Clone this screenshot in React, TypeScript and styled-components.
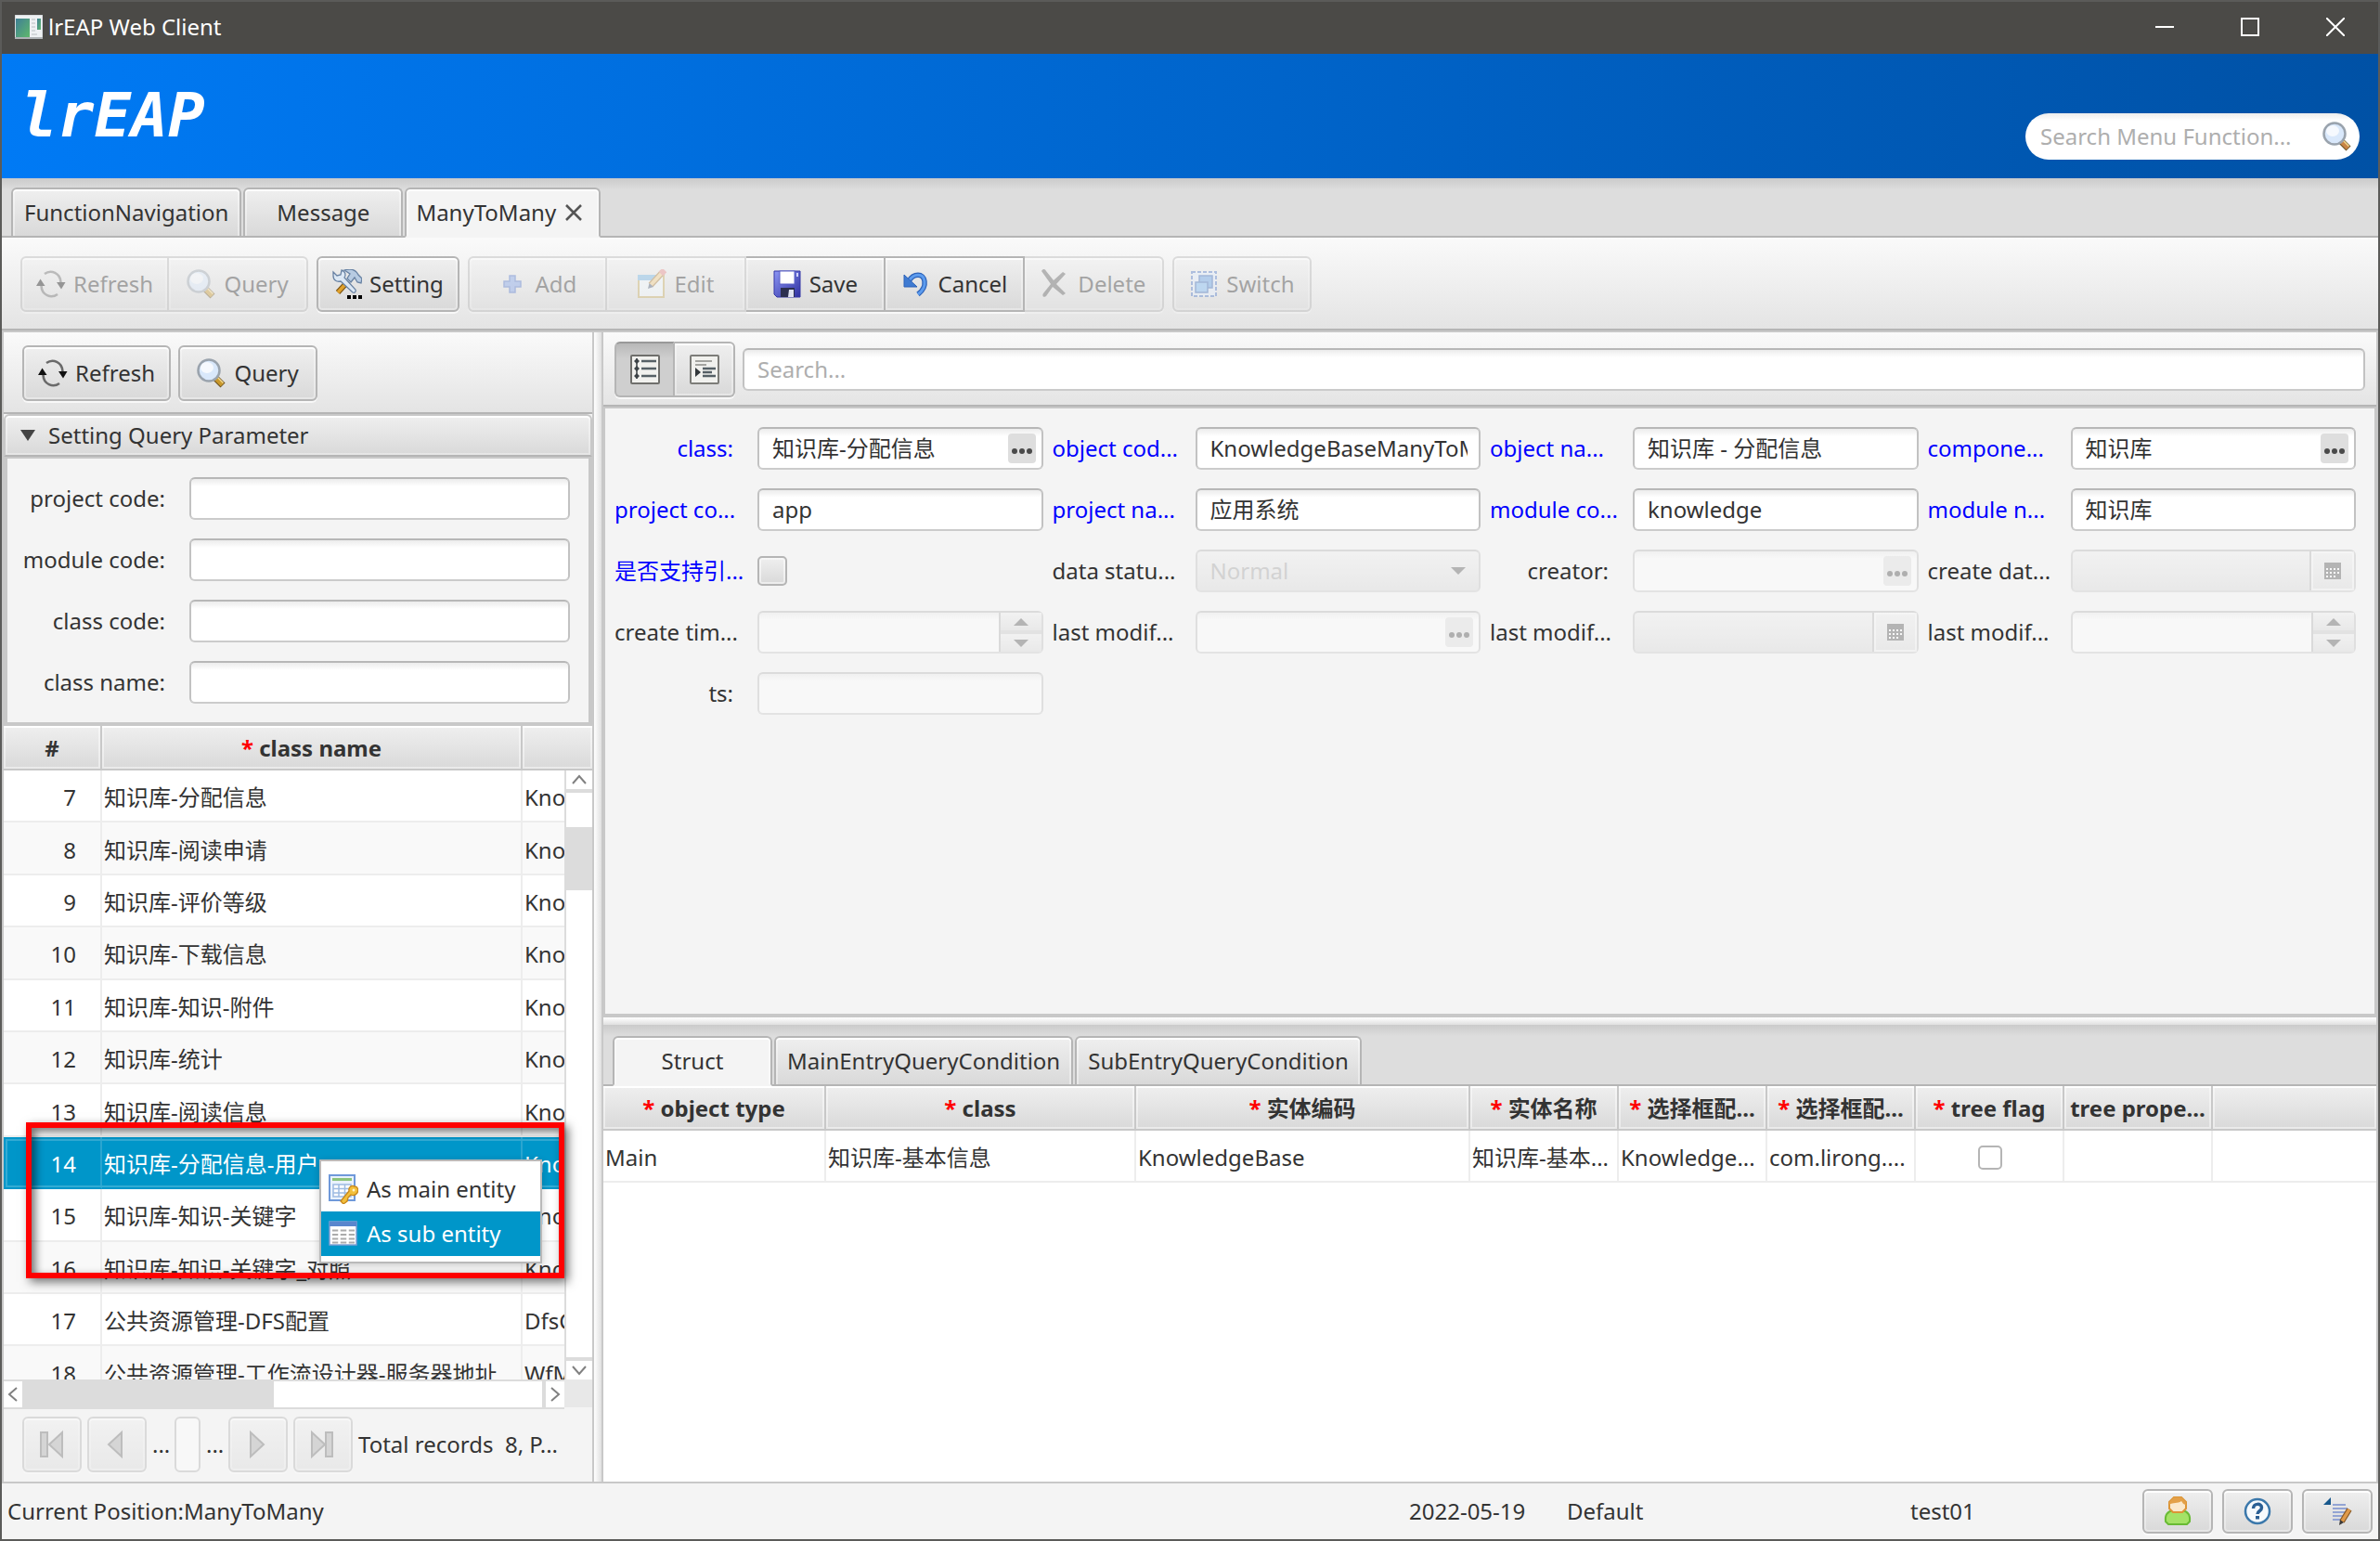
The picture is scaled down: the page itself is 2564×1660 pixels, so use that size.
import React, { useId } from "react";
import styled, { createGlobalStyle, css } from "styled-components";

/* ---------- theme values ---------- */
const edge = "#b5b5b5";
const line = "#c8c8c8";
const cellLine = "#ededed";
const accent = "#0096c9";
const face = "linear-gradient(#efefef, #d9d9d9)";
const barFace = "linear-gradient(#fafafa, #e4e4e4)";
const font = '"Noto Sans", "Noto Sans CJK SC", sans-serif';

const GlobalStyle = createGlobalStyle`
  * { box-sizing: border-box; }
  body { margin: 0; }
  body, button, input, select, table { font: 24px/32px ${font}; color: #333; }
  button { margin: 0; padding: 0; }
`;

/* ---------- icons ---------- */
const Svg = styled.svg<{ $w?: number; $h?: number }>`
  display: block;
  flex: none;
  width: ${(p) => p.$w ?? 32}px;
  height: ${(p) => p.$h ?? 32}px;
`;

const WindowIcon = () => (
  <Svg viewBox="0 0 30 26" $w={30} $h={26}>
    <defs>
      <linearGradient id="winPane" x1="0" y1="0" x2="1" y2="1">
        <stop offset="0" stopColor="#3f7f96" />
        <stop offset="1" stopColor="#5fb86c" />
      </linearGradient>
    </defs>
    <rect x="0" y="0" width="30" height="25" fill="#eef1f3" stroke="#c3c8cc" />
    <rect x="1" y="4" width="15" height="20" fill="url(#winPane)" />
    <rect x="24" y="4" width="4" height="12" fill="url(#winPane)" />
    <path d="M18 5h4M18 9h4M18 13h4M18 17h4M18 21h6" stroke="#b9bec2" strokeWidth="1" />
    <rect x="0" y="24" width="30" height="2" fill="#aeb2b5" />
  </Svg>
);

const RefreshIcon = () => (
  <Svg viewBox="0 0 32 32">
    <g fill="none" stroke="#6a6a6a" strokeWidth="2.6">
      <path d="M9 5C16 0 26 4 26.500 14" />
      <path d="M23 27C16 32 6 28 5.500 18" />
    </g>
    <path d="M22 14h9.500l-4.500 7.500z" fill="#111" />
    <path d="M0 18h9.500L4.500 10.500z" fill="#111" />
  </Svg>
);

const MagnifierIcon = ({ handle = "#c9982c" }: { handle?: string }) => (
  <Svg viewBox="0 0 32 32">
    <path d="M20.500 21.500l7.500 7.500" stroke="#6b5222" strokeWidth="7" />
    <path d="M20.500 21.500l7 7" stroke={handle} strokeWidth="5" />
    <path d="M22.500 20.500l6 6" stroke="#f3d98f" strokeWidth="1.500" />
    <circle cx="13" cy="13" r="11.500" fill="#d9e8fb" stroke="#9aa3ad" strokeWidth="2.500" />
    <ellipse cx="11" cy="10" rx="7" ry="6" fill="#fff" opacity=".75" />
  </Svg>
);

const ToolsIcon = () => (
  <Svg viewBox="0 0 32 32">
    <path d="M17 13L6 25" stroke="#7d5512" strokeWidth="6" />
    <path d="M17 13L6 25" stroke="#e0a12c" strokeWidth="3.500" />
    <path d="M13 1c7-2 12-1 15 5l4 4-1 5-4-1-3-5-4 5-4-4 3-5z" fill="#b7cbe2" stroke="#6882a3" strokeWidth="1.300" />
    <path d="M1 3l4 4 4-1 1-5c4 1 5 5 3 8l12 13c1 2-1 4-3 3L9 13c-4 1-8-1-8-6z" fill="#dce8f5" stroke="#6882a3" strokeWidth="1.300" />
    <path d="M16 28h4v4h-4zM22 28h4v4h-4zM28 28h4v4h-4z" fill="#000" />
  </Svg>
);

const AddIcon = () => (
  <Svg viewBox="0 0 32 32">
    <path d="M13 7h6v6h6v6h-6v6h-6v-6H7v-6h6z" fill="#7c9ee6" stroke="#4c71c6" strokeWidth="1.500" />
  </Svg>
);

const EditIcon = () => (
  <Svg viewBox="0 0 32 32">
    <rect x="2" y="7" width="27" height="23" fill="#f1f8fd" stroke="#c5ab5d" strokeWidth="2" />
    <rect x="1" y="6" width="20" height="6" fill="#6fb1e2" />
    <path d="M28 3L15 17" stroke="#a67831" strokeWidth="6.500" />
    <path d="M28 3L15 17" stroke="#f1cb84" strokeWidth="4" />
    <path d="M30 1l-4 4" stroke="#e58686" strokeWidth="6.500" />
    <path d="M12 21l1.500-6 4.500 4z" fill="#4a5a77" />
  </Svg>
);

const SaveIcon = () => (
  <Svg viewBox="0 0 32 32">
    <defs>
      <linearGradient id="disk" x1="0" y1="0" x2="1" y2="1">
        <stop offset="0" stopColor="#8c96f5" />
        <stop offset="1" stopColor="#2e30a0" />
      </linearGradient>
    </defs>
    <path d="M2 2h28v28H5l-3-3z" fill="url(#disk)" stroke="#3437a6" strokeWidth="1" />
    <rect x="8" y="2" width="16" height="14" fill="#fff" stroke="#5a60c8" />
    <rect x="9" y="20" width="15" height="10" fill="#2b2f4f" />
    <path d="M18 22h5v8h-6z" fill="#dfe3f2" />
    <rect x="26" y="4" width="2" height="4" fill="#cfd2ff" />
  </Svg>
);

const UndoIcon = () => (
  <Svg viewBox="0 0 32 32">
    <path d="M8 13C13 4 24 4 25 13c1 7-3 11-7 14" fill="none" stroke="#2d62b8" strokeWidth="5.500" />
    <path d="M8 13C13 4 24 4 25 13c1 7-3 11-7 14" fill="none" stroke="#5d9cee" strokeWidth="3" />
    <path d="M3 6v13h14z" fill="#3f7bd2" stroke="#2d62b8" strokeWidth="1" />
  </Svg>
);

const DeleteIcon = () => (
  <Svg viewBox="0 0 32 32">
    <path d="M1 2c2-3 4-2 5 0l8 10L24 3l3 2-10 11 10 10-3 2-11-9-7 10c-2 2-5 0-3-3l8-10z" fill="#5a5a5a" />
  </Svg>
);

const SwitchIcon = () => (
  <Svg viewBox="0 0 32 32">
    <rect x="3" y="3" width="26" height="26" fill="#dfeafa" stroke="#4a74c4" strokeWidth="2" strokeDasharray="4 2" />
    <rect x="11" y="7" width="14" height="13" fill="#5b9be4" stroke="#3565b5" strokeWidth="1.500" />
    <rect x="7" y="14" width="13" height="11" fill="#76b5f3" stroke="#3565b5" strokeWidth="1.500" />
  </Svg>
);

const ListPageIcon = () => (
  <Svg viewBox="0 0 32 32">
    <rect x="1" y="1" width="30" height="30" rx="1" fill="#f1f1ee" stroke="#6f6f6c" strokeWidth="2" />
    <path d="M12 7h16M12 15h16M12 23h16" stroke="#566066" strokeWidth="2.500" />
    <path d="M7 4v22" stroke="#3c4246" strokeWidth="1.500" />
    <path d="M7 4l3 3-3 3-3-3zM7 12l3 3-3 3-3-3zM7 20l3 3-3 3-3-3z" fill="#3c4246" />
  </Svg>
);

const IndentPageIcon = () => (
  <Svg viewBox="0 0 32 32">
    <rect x="1" y="1" width="30" height="30" rx="1" fill="#f1f1ee" stroke="#7d7d79" strokeWidth="2" />
    <path d="M6 7h18M6 11h12" stroke="#a4a4a0" strokeWidth="2.200" />
    <path d="M14 15h14M14 19h10M14 23h14" stroke="#566066" strokeWidth="2.500" />
    <path d="M6 14l6 5-6 5z" fill="#33383b" />
  </Svg>
);

const KeyTableIcon = () => (
  <Svg viewBox="0 0 32 32">
    <rect x="1" y="1" width="27" height="27" fill="#e9f2fc" stroke="#6f99da" strokeWidth="2" />
    <rect x="4" y="4" width="21" height="3" fill="#8cc47c" />
    <path d="M5 11h19v13H5zM5 15.500h19M5 20h19M11 11v13M17.500 11v13" fill="#fff" stroke="#9dbbe2" strokeWidth="1.500" />
    <path d="M13 29l9-11c-1-4 3-7 6-5 4 0 5 5 2 8-2 2-4 2-6 1l-3 3-1 4-4 3z" fill="#f2bf3b" stroke="#c8871a" strokeWidth="1.300" />
    <circle cx="27" cy="17" r="1.500" fill="#fff3c4" />
  </Svg>
);

const TableIcon = () => (
  <Svg viewBox="0 0 32 32">
    <rect x="1" y="3" width="29" height="25" fill="#fff" stroke="#7f9fd4" strokeWidth="1.500" />
    <rect x="1" y="3" width="29" height="5" fill="#5a86cd" />
    <path d="M4 12.500h24M4 17h24M4 21.500h24M4 25.500h24" stroke="#ababab" strokeWidth="2" />
    <path d="M11.500 9v18M20.500 9v18" stroke="#fff" strokeWidth="2.500" />
  </Svg>
);

const UserIcon = () => (
  <Svg viewBox="0 0 32 32">
    <path d="M3 27c-1-8 3-11 8-12h10c5 1 9 4 8 12l-3 3H6z" fill="#a5e267" stroke="#69bb35" strokeWidth="2" />
    <path d="M12 1h8l5 5v7l-4 4h-10l-4-4V6z" fill="#fbe8cb" stroke="#dc9536" strokeWidth="2" />
    <path d="M7 9V6l5-5h8l5 5v3c-3 0-4-3-5-4-4 3-9 1-13 4z" fill="#e3a048" />
  </Svg>
);

const HelpIcon = () => (
  <Svg viewBox="0 0 32 32">
    <circle cx="16" cy="16" r="13" fill="#f6fafd" stroke="#3b78ab" strokeWidth="2.500" />
    <path d="M11.500 13c0-6 9-6 9-1 0 4-4.500 3.500-4.500 7" fill="none" stroke="#2a5f94" strokeWidth="3.500" />
    <rect x="14" y="21" width="4" height="3.500" fill="#2a5f94" />
  </Svg>
);

const NoteIcon = () => (
  <Svg viewBox="0 0 32 32">
    <path d="M1 9L9 1v8z" fill="#17588c" />
    <path d="M11 9h14M11 13h16M11 17h14M11 21h11M11 25h9" stroke="#93a4d3" strokeWidth="2" />
    <path d="M29 14l-8 13" stroke="#8a5a25" strokeWidth="6" />
    <path d="M29 14l-8 13" stroke="#e09a4a" strokeWidth="3.500" />
    <path d="M18 31l1-6 4 3z" fill="#3a3a3a" />
  </Svg>
);

type PagerKind = "first" | "prev" | "next" | "last";
const pagerShapes: Record<PagerKind, string> = {
  first: "M4 3h7v26H4zM27 3v26L13 16z",
  prev: "M21 3v26L7 16z",
  next: "M8 3v26l14-13z",
  last: "M4 3v26l14-13zM19 3h7v26h-7z",
};
const PagerIcon = ({ kind }: { kind: PagerKind }) => (
  <Svg viewBox="0 0 32 32">
    <path d={pagerShapes[kind]} fill="#a8a8a8" stroke="#6c6c6c" strokeWidth="2" />
  </Svg>
);

const Chevron = ({ d }: { d: string }) => (
  <Svg viewBox="0 0 20 20" $w={20} $h={20}>
    <path d={d} fill="none" stroke="#808080" strokeWidth="2" />
  </Svg>
);

const Triangle = ({ up }: { up?: boolean }) => (
  <Svg viewBox="0 0 16 8" $w={16} $h={8}>
    <path d={up ? "M0 8h16L8 0z" : "M0 0h16L8 8z"} fill="#555" />
  </Svg>
);

const Dots = () => (
  <Svg viewBox="0 0 24 8" $w={24} $h={8}>
    <circle cx="4" cy="4" r="3" fill="#4a4a4a" />
    <circle cx="12" cy="4" r="3" fill="#4a4a4a" />
    <circle cx="20" cy="4" r="3" fill="#4a4a4a" />
  </Svg>
);

const CalendarIcon = () => (
  <Svg viewBox="0 0 18 18" $w={18} $h={18}>
    <rect width="18" height="18" fill="#555" />
    <path d="M2 6h2v2H2zM6 6h2v2H6zM10 6h2v2h-2zM14 6h2v2h-2zM2 10h2v2H2zM6 10h2v2H6zM10 10h2v2h-2zM14 10h2v2h-2zM2 14h2v2H2zM6 14h2v2H6zM10 14h2v2h-2z" fill="#fff" />
  </Svg>
);

/* ---------- window frame ---------- */
const Window = styled.div`
  display: flex;
  flex-direction: column;
  height: 100vh;
  border: 2px solid #5b5b59;
  background: #f4f4f4;
  white-space: nowrap;
  overflow: hidden;
`;

const TitleBar = styled.header`
  display: flex;
  align-items: center;
  height: 56px;
  flex: none;
  padding: 0 0 2px 14px;
  background: #4b4a47;
  color: #fff;
`;

const TitleText = styled.span`
  flex: 1;
  margin-left: 6px;
`;

const WindowButton = styled.button`
  display: grid;
  place-items: center;
  width: 92px;
  height: 54px;
  border: 0;
  background: none;
`;

const Banner = styled.div`
  display: flex;
  align-items: center;
  justify-content: space-between;
  height: 134px;
  flex: none;
  padding: 0 20px;
  background: linear-gradient(90deg, #007af5, #0051a5);
`;

const Logo = styled.h1`
  margin: 0;
  font: italic bold 66px/120px "DejaVu Sans Mono", monospace;
  color: #fff;
`;

const MenuSearch = styled.label`
  display: flex;
  align-items: center;
  align-self: flex-end;
  width: 360px;
  height: 50px;
  margin-bottom: 20px;
  padding: 0 8px 0 16px;
  border-radius: 25px;
  background: linear-gradient(#ececec, #fff 8px);
`;

const BareInput = styled.input`
  flex: 1;
  width: 0;
  min-width: 0;
  padding: 0;
  border: 0;
  outline: 0;
  background: none;
  &::placeholder { color: #aeaeae; opacity: 1; }
`;

/* ---------- tabs ---------- */
const TabStrip = styled.nav<{ $top?: number }>`
  display: flex;
  flex: none;
  gap: 2px;
  padding: ${(p) => p.$top ?? 10}px 10px 0;
  border-bottom: 2px solid ${edge};
  background: linear-gradient(#cbcbcb, #ddd 12px);
`;

const Tab = styled.button<{ $active?: boolean; $closable?: boolean }>`
  display: flex;
  align-items: center;
  justify-content: center;
  gap: 10px;
  min-width: 172px;
  height: 52px;
  padding: 0 ${(p) => (p.$closable ? 18 : 12)}px 0 ${(p) => (p.$closable ? 10 : 12)}px;
  border: 2px solid ${edge};
  border-bottom: 0;
  border-radius: 6px 6px 0 0;
  background: ${(p) => (p.$active ? "#f4f4f4" : face)};
  box-shadow: inset 0 2px 0 #fff, inset 2px 0 0 rgba(255, 255, 255, 0.4), inset -2px 0 0 rgba(255, 255, 255, 0.4);
  ${(p) => p.$active && css`height: 54px; margin-bottom: -2px; border-bottom: 2px solid #f4f4f4;`}
`;

/* ---------- buttons ---------- */
const bevel = css`
  border: 2px solid ${edge};
  background: ${face};
  box-shadow: inset 0 2px 0 #fff, inset 0 0 0 2px rgba(255, 255, 255, 0.35), 0 2px 0 rgba(255, 255, 255, 0.7);
`;

const PushButton = styled.button`
  display: flex;
  align-items: center;
  justify-content: center;
  gap: 8px;
  min-width: 150px;
  height: 60px;
  padding: 0 15px;
  ${bevel}
  border-radius: 6px;
  &:disabled { color: #333; opacity: 0.4; }
`;

const IconButton = styled(PushButton)<{ $w: number; $h: number }>`
  min-width: 0;
  width: ${(p) => p.$w}px;
  height: ${(p) => p.$h}px;
  padding: 0;
`;

const ButtonGroup = styled.div`
  display: flex;
  & > button { border-radius: 0; }
  & > button:not(:first-child) { border-left: 0; }
  & > button:first-child { border-radius: 6px 0 0 6px; }
  & > button:last-child { border-radius: 0 6px 6px 0; }
`;

const ToolBar = styled.div<{ $pad: string; $gap?: number }>`
  display: flex;
  align-items: center;
  flex: none;
  gap: ${(p) => p.$gap ?? 8}px;
  padding: ${(p) => p.$pad};
  border-bottom: 2px solid ${edge};
  background: ${barFace};
`;

const ToggleButton = styled.button<{ $on?: boolean }>`
  display: grid;
  place-items: center;
  width: 65px;
  height: 60px;
  ${bevel}
  ${(p) => p.$on && css`
    border-top-color: #999;
    background: linear-gradient(#b8b8b8, #cfcfcf 16px);
    box-shadow: 0 2px 0 rgba(255, 255, 255, 0.7);
  `}
`;

/* ---------- layout ---------- */
const Workspace = styled.main`
  display: grid;
  grid-template-columns: 638px 8px minmax(0, 1fr);
  flex: 1;
  min-height: 0;
  border-top: 2px solid ${line};
  border-bottom: 2px solid ${line};
`;

const SidePane = styled.section`
  display: flex;
  flex-direction: column;
  min-height: 0;
  border: solid ${line};
  border-width: 0 2px;
`;

const Divider = styled.div<{ $across?: boolean }>`
  background: linear-gradient(${(p) => (p.$across ? "180deg" : "90deg")}, #fff, #e0e0e0);
`;

const DetailPane = styled.section`
  display: grid;
  grid-template-rows: minmax(0, 3fr) 8px minmax(0, 2fr);
  min-width: 0;
  min-height: 0;
  border: solid ${line};
  border-width: 0 2px;
`;

const DetailTop = styled.div`
  display: flex;
  flex-direction: column;
  min-height: 0;
`;

const DetailBottom = styled.div`
  display: flex;
  flex-direction: column;
  min-height: 0;
  background: #fff;
`;

/* ---------- fields ---------- */
const Box = styled.span<{ $off?: boolean; $flat?: boolean; $grow?: boolean; $pad?: string }>`
  display: flex;
  align-items: center;
  min-width: 0;
  ${(p) => p.$grow && css`flex: 1;`}
  height: 46px;
  padding: ${(p) => p.$pad ?? "0 12px 0 14px"};
  border: 2px solid;
  border-color: #b7b7b7 #c2c2c2 #cbcbcb;
  border-radius: 6px;
  background: ${(p) => (p.$flat ? face : "linear-gradient(#ececec, #fff 8px)")};
  ${(p) => p.$off && css`opacity: 0.4;`}
`;

const LookupButton = styled.button`
  display: grid;
  place-items: center;
  width: 30px;
  height: 32px;
  padding-top: 6px;
  border: 0;
  border-radius: 4px;
  background: #dedede;
`;

const DateButton = styled.button`
  display: grid;
  place-items: center;
  align-self: stretch;
  width: 48px;
  border: 0;
  border-left: 2px solid ${edge};
  background: none;
  box-shadow: inset 0 0 0 2px rgba(255, 255, 255, 0.6);
`;

const SpinnerButtons = styled.span`
  display: grid;
  grid-template-rows: 1fr 1fr;
  gap: 4px;
  align-self: stretch;
  width: 46px;
  border-left: 2px solid ${edge};
  background: ${line};
`;

const SpinButton = styled.button`
  display: grid;
  place-items: center;
  border: 0;
  background: ${face};
`;

const StatusSelect = styled.select`
  flex: 1;
  min-width: 0;
  padding: 0;
  border: 0;
  background: none;
  appearance: none;
  &:disabled { color: #a0a0a0; opacity: 1; }
`;

const CheckInput = styled.input<{ $size: number; $plain?: boolean }>`
  appearance: none;
  display: block;
  width: ${(p) => p.$size}px;
  height: ${(p) => p.$size}px;
  margin: 0;
  border: 2px solid ${edge};
  border-radius: 5px;
  background: ${(p) => (p.$plain ? "#fff" : face)};
  ${(p) => !p.$plain && css`box-shadow: inset 0 0 0 2px rgba(255, 255, 255, 0.5);`}
`;

const FieldGrid = styled.form`
  display: grid;
  grid-template-columns: repeat(4, minmax(0, 1fr));
  gap: 20px 10px;
  flex: 1;
  align-content: start;
  padding: 20px 20px 20px 10px;
  border: solid ${line};
  border-width: 2px 2px 4px;
`;

const FieldRow = styled.div`
  display: grid;
  grid-template-columns: 154px minmax(0, 1fr);
  align-items: center;
  height: 46px;
`;

const FieldLabel = styled.label<{ $key?: boolean; $cut?: boolean }>`
  padding-right: ${(p) => (p.$cut ? 0 : 26)}px;
  text-align: ${(p) => (p.$cut ? "left" : "right")};
  color: ${(p) => (p.$key ? "#00f" : "#333")};
`;

type Kind = "text" | "lookup" | "check" | "select" | "date" | "time";
type FieldSpec = { label: string; kind?: Kind; value?: string; isKey?: boolean; off?: boolean };

const fields: FieldSpec[] = [
  { label: "class:", kind: "lookup", value: "知识库-分配信息", isKey: true },
  { label: "object cod...", value: "KnowledgeBaseManyToMany", isKey: true },
  { label: "object na...", value: "知识库 - 分配信息", isKey: true },
  { label: "compone...", kind: "lookup", value: "知识库", isKey: true },
  { label: "project co...", value: "app", isKey: true },
  { label: "project na...", value: "应用系统", isKey: true },
  { label: "module co...", value: "knowledge", isKey: true },
  { label: "module n...", value: "知识库", isKey: true },
  { label: "是否支持引...", kind: "check", isKey: true },
  { label: "data statu...", kind: "select", value: "Normal", off: true },
  { label: "creator:", kind: "lookup", off: true },
  { label: "create dat...", kind: "date", off: true },
  { label: "create tim...", kind: "time", off: true },
  { label: "last modif...", kind: "lookup", off: true },
  { label: "last modif...", kind: "date", off: true },
  { label: "last modif...", kind: "time", off: true },
  { label: "ts:", off: true },
];

function Control({ id, kind = "text", value = "", off }: FieldSpec & { id: string }) {
  const input = <BareInput id={id} defaultValue={value} disabled={off} />;
  switch (kind) {
    case "check":
      return <CheckInput id={id} type="checkbox" $size={32} />;
    case "select":
      return (
        <Box $off={off} $flat $pad="0 14px">
          <StatusSelect id={id} disabled={off} defaultValue={value}>
            <option>{value}</option>
          </StatusSelect>
          <Triangle />
        </Box>
      );
    case "lookup":
      return (
        <Box $off={off} $pad="0 6px 0 14px">
          {input}
          <LookupButton type="button" aria-label="Choose" disabled={off}><Dots /></LookupButton>
        </Box>
      );
    case "date":
      return (
        <Box $off={off} $flat $pad="0 0 0 14px">
          {input}
          <DateButton type="button" aria-label="Pick date" disabled={off}><CalendarIcon /></DateButton>
        </Box>
      );
    case "time":
      return (
        <Box $off={off} $pad="0 0 0 14px">
          {input}
          <SpinnerButtons>
            <SpinButton type="button" aria-label="Later" disabled={off}><Triangle up /></SpinButton>
            <SpinButton type="button" aria-label="Earlier" disabled={off}><Triangle /></SpinButton>
          </SpinnerButtons>
        </Box>
      );
    default:
      return <Box $off={off}>{input}</Box>;
  }
}

function Field(spec: FieldSpec) {
  const id = useId();
  return (
    <FieldRow>
      <FieldLabel htmlFor={id} $key={spec.isKey} $cut={spec.label.endsWith("...")}>{spec.label}</FieldLabel>
      <Control {...spec} id={id} />
    </FieldRow>
  );
}

/* ---------- query parameters ---------- */
const PaneTitle = styled.button`
  display: flex;
  align-items: center;
  gap: 14px;
  flex: none;
  height: 46px;
  padding: 0 16px;
  border: 2px solid ${line};
  border-bottom-color: ${edge};
  border-radius: 6px 6px 0 0;
  background: ${face};
  box-shadow: inset 0 2px 0 #fff, inset 0 0 0 2px rgba(255, 255, 255, 0.35);
`;

const ParamForm = styled.form`
  display: grid;
  flex: none;
  gap: 20px;
  padding: 20px 20px 20px 0;
  border: 4px solid ${line};
  border-top-width: 2px;
`;

const ParamRow = styled.div`
  display: grid;
  grid-template-columns: minmax(0, 1fr) 410px;
  align-items: center;
`;

const params = ["project code:", "module code:", "class code:", "class name:"];

function Param({ label }: { label: string }) {
  const id = useId();
  return (
    <ParamRow>
      <FieldLabel htmlFor={id}>{label}</FieldLabel>
      <Box><BareInput id={id} /></Box>
    </ParamRow>
  );
}

/* ---------- tables ---------- */
const Table = styled.table<{ $height?: number }>`
  width: 100%;
  flex: none;
  table-layout: fixed;
  border-collapse: separate;
  border-spacing: 0;
  ${(p) => p.$height && css`height: ${p.$height}px;`}
`;

const HeadCell = styled.th`
  height: 48px;
  padding: 2px 0 0;
  border-right: 2px solid ${line};
  border-bottom: 2px solid ${line};
  background: ${face};
  box-shadow: inset 0 2px 0 #fff, inset 0 0 0 2px rgba(255, 255, 255, 0.45);
  font-weight: bold;
  text-align: center;
  overflow: hidden;
  &:last-child { border-right: 0; }
`;

const Star = styled.span`
  color: #f00;
`;

const Row = styled.tr<{ $selected?: boolean; $alt?: boolean }>`
  background: ${(p) => (p.$selected ? accent : p.$alt ? "#f9f9f9" : "#fff")};
  ${(p) => p.$selected && css`
    outline: 2px solid #33abd4;
    outline-offset: -4px;
    & > td { color: #fff; border-color: #2aa5d0 #2aa5d0 ${accent}; }
  `}
`;

const Cell = styled.td<{ $num?: boolean }>`
  height: 56px;
  padding: 4px ${(p) => (p.$num ? 26 : 0)}px 0 2px;
  border-right: 2px solid ${cellLine};
  border-bottom: 2px solid ${cellLine};
  text-align: ${(p) => (p.$num ? "right" : "left")};
  overflow: hidden;
  &:last-child { border-right: 0; }
`;

const CellCenter = styled.div`
  display: grid;
  place-items: center;
`;

const classes: [number, string, string][] = [
  [7, "知识库-分配信息", "Kno"],
  [8, "知识库-阅读申请", "Kno"],
  [9, "知识库-评价等级", "Kno"],
  [10, "知识库-下载信息", "Kno"],
  [11, "知识库-知识-附件", "Kno"],
  [12, "知识库-统计", "Kno"],
  [13, "知识库-阅读信息", "Kno"],
  [14, "知识库-分配信息-用户", "Kno"],
  [15, "知识库-知识-关键字", "Kno"],
  [16, "知识库-知识-关键字_对照", "Kno"],
  [17, "公共资源管理-DFS配置", "DfsC"],
  [18, "公共资源管理-工作流设计器-服务器地址", "WfM"],
];

const GridBody = styled.div`
  position: relative;
  display: grid;
  grid-template-columns: minmax(0, 1fr) 30px;
  grid-template-rows: minmax(0, 1fr) 32px;
  flex: 1;
  min-height: 0;
`;

const Viewport = styled.div`
  min-height: 0;
  overflow: hidden;
  background: #fff;
`;

const ScrollBar = styled.div<{ $across?: boolean }>`
  display: flex;
  flex-direction: ${(p) => (p.$across ? "row" : "column")};
  min-height: 0;
  background: #fff;
  border: solid #dcdcdc;
  border-width: ${(p) => (p.$across ? "2px 0" : "0 0 0 2px")};
`;

const ScrollButton = styled.button<{ $across?: boolean }>`
  display: grid;
  place-items: center;
  flex: none;
  width: ${(p) => (p.$across ? 20 : 28)}px;
  height: ${(p) => (p.$across ? 28 : 20)}px;
  border: 0;
  background: #fff;
`;

const ScrollPart = styled.div<{ $grow: number; $thumb?: boolean }>`
  flex: ${(p) => p.$grow} 1 0;
  background: ${(p) => (p.$thumb ? "#dcdcdc" : "#fff")};
`;

const ScrollGap = styled.div`
  flex: 0 0 4px;
  align-self: stretch;
  background: #dcdcdc;
`;

const Corner = styled.div`
  background: #e8e8e8;
  border-bottom: 2px solid #f4f4f4;
`;

const ContextMenu = styled.menu`
  position: absolute;
  left: 340px;
  top: 419px;
  width: 240px;
  margin: 0;
  padding: 6px 0;
  border: 2px solid #b9b9b9;
  background: #fff;
  box-shadow: 0 2px 8px rgba(0, 0, 0, 0.2);
  list-style: none;
`;

const MenuItem = styled.button<{ $active?: boolean }>`
  display: flex;
  align-items: center;
  gap: 9px;
  width: 100%;
  height: 48px;
  padding: 0 8px;
  border: 0;
  background: ${(p) => (p.$active ? accent : "#fff")};
  color: ${(p) => (p.$active ? "#fff" : "#333")};
`;

const Highlight = styled.div`
  position: absolute;
  left: 24px;
  top: 379px;
  width: 580px;
  height: 168px;
  border: 6px solid #f00;
  box-shadow: 4px 4px 10px rgba(0, 0, 0, 0.55), inset 4px 4px 10px rgba(0, 0, 0, 0.55);
  pointer-events: none;
`;

const Pager = styled.div`
  display: flex;
  align-items: center;
  flex: none;
  gap: 6px;
  height: 78px;
  padding: 0 20px 2px;
`;

const PagerDots = styled.span`
  width: 18px;
`;

const PageBox = styled(BareInput)`
  flex: none;
  width: 28px;
  height: 60px;
  border: 2px solid ${edge};
  border-radius: 6px;
  background: #fff;
  opacity: 0.4;
`;

/* ---------- structure table ---------- */
const structColumns: { label: string; width?: number; required?: boolean }[] = [
  { label: "object type", width: 240, required: true },
  { label: "class", width: 334, required: true },
  { label: "实体编码", width: 360, required: true },
  { label: "实体名称", width: 160, required: true },
  { label: "选择框配...", width: 160, required: true },
  { label: "选择框配...", width: 160, required: true },
  { label: "tree flag", width: 160, required: true },
  { label: "tree prope...", width: 160 },
  { label: "" },
];

const StatusBar = styled.footer`
  display: flex;
  align-items: center;
  flex: none;
  height: 60px;
  padding: 0 6px;
`;

const StatusCell = styled.span<{ $w?: number }>`
  ${(p) => (p.$w ? css`width: ${p.$w}px;` : css`flex: 1;`)}
`;

const StatusButtons = styled.div`
  display: flex;
  gap: 10px;
`;

export default function App() {
  return (
    <>
      <GlobalStyle />
      <Window>
        <TitleBar>
          <WindowIcon />
          <TitleText>lrEAP Web Client</TitleText>
          <WindowButton aria-label="Minimize">
            <Svg viewBox="0 0 20 20" $w={20} $h={20}><path d="M0 10h20" stroke="#fff" strokeWidth="2" /></Svg>
          </WindowButton>
          <WindowButton aria-label="Maximize">
            <Svg viewBox="0 0 20 20" $w={20} $h={20}><path d="M1 1h18v18H1z" fill="none" stroke="#fff" strokeWidth="2" /></Svg>
          </WindowButton>
          <WindowButton aria-label="Close">
            <Svg viewBox="0 0 20 20" $w={20} $h={20}><path d="M0 0l20 20M20 0L0 20" stroke="#fff" strokeWidth="2" /></Svg>
          </WindowButton>
        </TitleBar>

        <Banner>
          <Logo>lrEAP</Logo>
          <MenuSearch>
            <BareInput placeholder="Search Menu Function..." aria-label="Search menu function" />
            <MagnifierIcon handle="#c98546" />
          </MenuSearch>
        </Banner>

        <TabStrip>
          <Tab>FunctionNavigation</Tab>
          <Tab>Message</Tab>
          <Tab $active $closable>
            ManyToMany
            <Svg viewBox="0 0 18 18" $w={18} $h={18}><path d="M1 1l16 16M17 1L1 17" stroke="#555" strokeWidth="2.500" /></Svg>
          </Tab>
        </TabStrip>

        <ToolBar $pad="20px 20px 18px" $gap={9}>
          <ButtonGroup>
            <PushButton disabled><RefreshIcon />Refresh</PushButton>
            <PushButton disabled><MagnifierIcon />Query</PushButton>
          </ButtonGroup>
          <PushButton><ToolsIcon />Setting</PushButton>
          <ButtonGroup>
            <PushButton disabled><AddIcon />Add</PushButton>
            <PushButton disabled><EditIcon />Edit</PushButton>
            <PushButton><SaveIcon />Save</PushButton>
            <PushButton><UndoIcon />Cancel</PushButton>
            <PushButton disabled><DeleteIcon />Delete</PushButton>
          </ButtonGroup>
          <PushButton disabled><SwitchIcon />Switch</PushButton>
        </ToolBar>

        <Workspace>
          <SidePane>
            <ToolBar $pad="14px 20px 12px">
              <PushButton><RefreshIcon />Refresh</PushButton>
              <PushButton><MagnifierIcon />Query</PushButton>
            </ToolBar>
            <PaneTitle aria-expanded="true">
              <Svg viewBox="0 0 16 12" $w={16} $h={12}><path d="M0 0h16L8 12z" fill="#444" /></Svg>
              Setting Query Parameter
            </PaneTitle>
            <ParamForm>
              {params.map((label) => <Param key={label} label={label} />)}
            </ParamForm>

            <Table>
              <colgroup><col width="106" /><col width="453" /><col /></colgroup>
              <thead>
                <tr>
                  <HeadCell>#</HeadCell>
                  <HeadCell><Star>* </Star>class name</HeadCell>
                  <HeadCell />
                </tr>
              </thead>
            </Table>
            <GridBody>
              <Viewport>
                <Table $height={677}>
                  <colgroup><col width="106" /><col width="453" /><col /></colgroup>
                  <tbody>
                    {classes.map(([no, name, code], i) => (
                      <Row key={no} $selected={no === 14} $alt={i % 2 === 1}>
                        <Cell $num>{no}</Cell>
                        <Cell>{name}</Cell>
                        <Cell>{code}</Cell>
                      </Row>
                    ))}
                  </tbody>
                </Table>
              </Viewport>
              <ScrollBar>
                <ScrollButton aria-label="Scroll up"><Chevron d="M3 14l7-8 7 8" /></ScrollButton>
                <ScrollGap />
                <ScrollPart $grow={37} />
                <ScrollPart $grow={68} $thumb />
                <ScrollPart $grow={503} />
                <ScrollGap />
                <ScrollButton aria-label="Scroll down"><Chevron d="M3 6l7 8 7-8" /></ScrollButton>
              </ScrollBar>
              <ScrollBar $across>
                <ScrollButton $across aria-label="Scroll left"><Chevron d="M14 3l-8 7 8 7" /></ScrollButton>
                <ScrollPart $grow={271} $thumb />
                <ScrollPart $grow={289} />
                <ScrollGap />
                <ScrollButton $across aria-label="Scroll right"><Chevron d="M6 3l8 7-8 7" /></ScrollButton>
              </ScrollBar>
              <Corner />
              <ContextMenu>
                <li><MenuItem><KeyTableIcon />As main entity</MenuItem></li>
                <li><MenuItem $active><TableIcon />As sub entity</MenuItem></li>
              </ContextMenu>
              <Highlight />
            </GridBody>
            <Pager>
              <IconButton disabled $w={64} $h={60} aria-label="First page"><PagerIcon kind="first" /></IconButton>
              <IconButton disabled $w={64} $h={60} aria-label="Previous page"><PagerIcon kind="prev" /></IconButton>
              <PagerDots>...</PagerDots>
              <PageBox aria-label="Page" disabled />
              <PagerDots>...</PagerDots>
              <IconButton disabled $w={64} $h={60} aria-label="Next page"><PagerIcon kind="next" /></IconButton>
              <IconButton disabled $w={64} $h={60} aria-label="Last page"><PagerIcon kind="last" /></IconButton>
              <span>Total records &nbsp;8, P...</span>
            </Pager>
          </SidePane>

          <Divider />

          <DetailPane>
            <DetailTop>
              <ToolBar $pad="10px 12px 8px">
                <ButtonGroup>
                  <ToggleButton $on aria-label="List view"><ListPageIcon /></ToggleButton>
                  <ToggleButton aria-label="Outline view"><IndentPageIcon /></ToggleButton>
                </ButtonGroup>
                <Box $grow><BareInput placeholder="Search..." aria-label="Search" /></Box>
              </ToolBar>
              <FieldGrid>
                {fields.map((spec, i) => <Field key={i} {...spec} />)}
              </FieldGrid>
            </DetailTop>
            <Divider $across />
            <DetailBottom>
              <TabStrip $top={12}>
                <Tab $active>Struct</Tab>
                <Tab>MainEntryQueryCondition</Tab>
                <Tab>SubEntryQueryCondition</Tab>
              </TabStrip>
              <Table>
                <colgroup>{structColumns.map((c, i) => <col key={i} width={c.width} />)}</colgroup>
                <thead>
                  <tr>
                    {structColumns.map((c, i) => (
                      <HeadCell key={i}>{c.required && <Star>* </Star>}{c.label}</HeadCell>
                    ))}
                  </tr>
                </thead>
                <tbody>
                  <Row>
                    <Cell>Main</Cell>
                    <Cell>知识库-基本信息</Cell>
                    <Cell>KnowledgeBase</Cell>
                    <Cell>知识库-基本...</Cell>
                    <Cell>Knowledge...</Cell>
                    <Cell>com.lirong....</Cell>
                    <Cell><CellCenter><CheckInput type="checkbox" aria-label="tree flag" $size={26} $plain /></CellCenter></Cell>
                    <Cell />
                    <Cell />
                  </Row>
                </tbody>
              </Table>
            </DetailBottom>
          </DetailPane>
        </Workspace>

        <StatusBar>
          <StatusCell>Current Position:ManyToMany</StatusCell>
          <StatusCell $w={170}>2022-05-19</StatusCell>
          <StatusCell $w={370}>Default</StatusCell>
          <StatusCell $w={250}>test01</StatusCell>
          <StatusButtons>
            <IconButton $w={76} $h={48} aria-label="User"><UserIcon /></IconButton>
            <IconButton $w={76} $h={48} aria-label="Help"><HelpIcon /></IconButton>
            <IconButton $w={76} $h={48} aria-label="Notes"><NoteIcon /></IconButton>
          </StatusButtons>
        </StatusBar>
      </Window>
    </>
  );
}
